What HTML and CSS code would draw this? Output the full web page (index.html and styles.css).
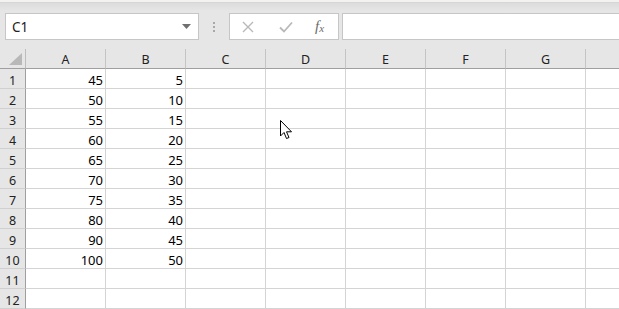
FILE: index.html
```html
<!DOCTYPE html>
<html>
<head>
<meta charset="utf-8">
<link rel="stylesheet" href="styles.css">
</head>
<body>
<div class="topstrip"></div>
<div class="toolbar">
  <div class="namebox">
    <span class="nametext">C1</span>
    <svg class="dd" width="9" height="5" viewBox="0 0 9 5"><path d="M0 0 H9 L4.5 5 Z" fill="#707070"/></svg>
  </div>
  <div class="dots"><i></i><i></i><i></i></div>
  <div class="fbtns">
    <svg class="ico" width="12" height="12" viewBox="0 0 12 12"><path d="M1 1 L11 11 M11 1 L1 11" stroke="#b9b9b9" stroke-width="1.4" fill="none"/></svg>
    <svg class="ico" width="14" height="12" viewBox="0 0 14 12"><path d="M1 6.5 L5 10.5 L13 1.5" stroke="#b9b9b9" stroke-width="1.8" fill="none"/></svg>
    <span class="fx">f<sub>x</sub></span>
  </div>
  <div class="finput"></div>
</div>
<div class="grid">
  <div class="corner"><svg width="13" height="12" viewBox="0 0 13 12"><path d="M13 0 V12 H0 Z" fill="#b8b8b8"/></svg></div>
  <div class="ch">A</div><div class="ch">B</div><div class="ch">C</div><div class="ch">D</div><div class="ch">E</div><div class="ch">F</div><div class="ch">G</div><div class="ch last"></div>

  <div class="rh">1</div><div class="c">45</div><div class="c">5</div><div class="c"></div><div class="c"></div><div class="c"></div><div class="c"></div><div class="c"></div><div class="c"></div>
  <div class="rh">2</div><div class="c">50</div><div class="c">10</div><div class="c"></div><div class="c"></div><div class="c"></div><div class="c"></div><div class="c"></div><div class="c"></div>
  <div class="rh">3</div><div class="c">55</div><div class="c">15</div><div class="c"></div><div class="c"></div><div class="c"></div><div class="c"></div><div class="c"></div><div class="c"></div>
  <div class="rh">4</div><div class="c">60</div><div class="c">20</div><div class="c"></div><div class="c"></div><div class="c"></div><div class="c"></div><div class="c"></div><div class="c"></div>
  <div class="rh">5</div><div class="c">65</div><div class="c">25</div><div class="c"></div><div class="c"></div><div class="c"></div><div class="c"></div><div class="c"></div><div class="c"></div>
  <div class="rh">6</div><div class="c">70</div><div class="c">30</div><div class="c"></div><div class="c"></div><div class="c"></div><div class="c"></div><div class="c"></div><div class="c"></div>
  <div class="rh">7</div><div class="c">75</div><div class="c">35</div><div class="c"></div><div class="c"></div><div class="c"></div><div class="c"></div><div class="c"></div><div class="c"></div>
  <div class="rh">8</div><div class="c">80</div><div class="c">40</div><div class="c"></div><div class="c"></div><div class="c"></div><div class="c"></div><div class="c"></div><div class="c"></div>
  <div class="rh">9</div><div class="c">90</div><div class="c">45</div><div class="c"></div><div class="c"></div><div class="c"></div><div class="c"></div><div class="c"></div><div class="c"></div>
  <div class="rh">10</div><div class="c">100</div><div class="c">50</div><div class="c"></div><div class="c"></div><div class="c"></div><div class="c"></div><div class="c"></div><div class="c"></div>
  <div class="rh">11</div><div class="c"></div><div class="c"></div><div class="c"></div><div class="c"></div><div class="c"></div><div class="c"></div><div class="c"></div><div class="c"></div>
  <div class="rh">12</div><div class="c"></div><div class="c"></div><div class="c"></div><div class="c"></div><div class="c"></div><div class="c"></div><div class="c"></div><div class="c"></div>

  <svg class="cursor" width="13" height="20" viewBox="0 0 13 20"><path d="M0.5 0.5 V16 L4 12.5 L6.5 18.5 L9 17.5 L6.5 11.8 L11.5 11.8 Z" fill="#fff" stroke="#000" stroke-width="1" stroke-linejoin="miter"/></svg>
</div>
</body>
</html>
```

FILE: styles.css
```css
* { box-sizing: border-box; }
html, body { margin: 0; padding: 0; }
body {
  width: 619px;
  height: 309px;
  overflow: hidden;
  background: #fff;
  font-family: "Noto Sans", "Open Sans", sans-serif;
  color: #000;
}
.topstrip {
  height: 3px;
  background: #f3f2f1;
  border-bottom: 1px solid #d6d6d6;
}
.toolbar {
  height: 46px;
  background: linear-gradient(#dcdcdc 0px, #e6e6e6 8px, #e6e6e6 100%);
  display: flex;
  align-items: flex-start;
  padding-top: 10px;
  padding-left: 5px;
}
.namebox {
  width: 194px;
  height: 27px;
  background: #fff;
  border: 1px solid #c6c6c6;
  display: flex;
  align-items: center;
  justify-content: space-between;
  padding: 0 7px 0 6px;
}
.nametext { font-size: 13.5px; color: #222; }
.dd { display: block; }
.dots {
  width: 30px;
  height: 27px;
  display: flex;
  flex-direction: column;
  align-items: center;
  justify-content: center;
  gap: 2px;
}
.dots i { display: block; width: 2px; height: 2px; background: #a8a8a8; }
.fbtns {
  width: 110px;
  height: 27px;
  background: #fff;
  border: 1px solid #c6c6c6;
  display: flex;
  align-items: center;
  padding-left: 12px;
  gap: 0;
}
.ico { display: block; }
.fbtns .ico:first-child { margin-right: 25px; }
.fbtns .ico:nth-child(2) { margin-right: 22px; }
.fx {
  font-family: "Liberation Serif", serif;
  font-style: italic;
  font-size: 15px;
  color: #6b6b6b;
  line-height: 1;
}
.fx sub { font-size: 11px; vertical-align: -1px; }
.finput {
  margin-left: 3px;
  flex: 1;
  height: 27px;
  background: #fff;
  border: 1px solid #c6c6c6;
  border-right: none;
}
.grid {
  position: relative;
  display: grid;
  grid-template-columns: 26px repeat(7, 80px) 1fr;
  grid-auto-rows: 20px;
  background: #fff;
}
.corner, .ch, .rh {
  background: #e6e6e6;
}
.corner {
  border-right: 1px solid #bdbdbd;
  border-bottom: 1px solid #9f9f9f;
  display: flex;
  align-items: flex-end;
  justify-content: flex-end;
  padding: 0 3px 3px 0;
}
.corner svg { display: block; }
.ch {
  border-bottom: 1px solid #9f9f9f;
  border-right: 1px solid #c4c4c4;
  font-size: 12.5px;
  text-align: center;
  line-height: 19px;
  padding-top: 1px;
  color: #222;
}
.ch.last { border-right: none; }
.rh {
  border-right: 1px solid #9f9f9f;
  border-bottom: 1px solid #d0d0d0;
  font-size: 12.5px;
  text-align: center;
  line-height: 19px;
  padding-top: 2px;
  color: #222;
}
.c {
  border-right: 1px solid #d4d4d4;
  border-bottom: 1px solid #d4d4d4;
  font-size: 13px;
  text-align: right;
  padding-right: 2px;
  padding-top: 2px;
  line-height: 19px;
  overflow: hidden;
}
.c:nth-child(9n) { border-right: none; }
.cursor {
  position: absolute;
  left: 280px;
  top: 71px;
}
```
